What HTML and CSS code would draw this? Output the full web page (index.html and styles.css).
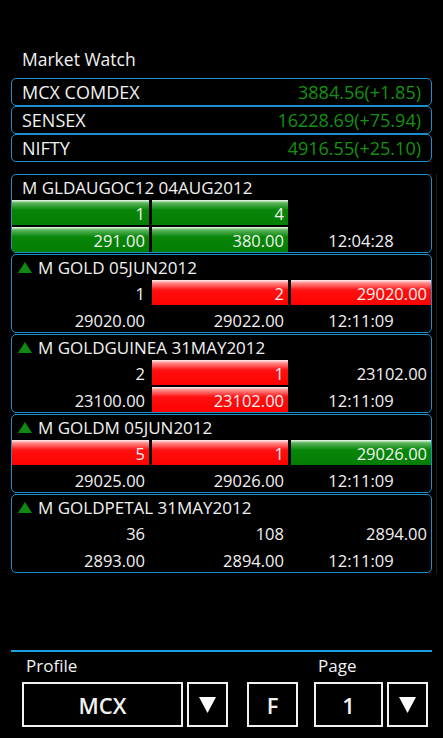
FILE: index.html
```html
<!DOCTYPE html>
<html lang="en">

<head>
    <meta charset="UTF-8">
    <meta name="viewport" content="width=device-width, initial-scale=1.0">
    <title>Market Watch</title>
    <link rel="stylesheet" href="styles.css">
</head>

<body>
    <div class="page">
        <div class="title">Market Watch</div>

        <div class="indices">
            <div class="index-row"><span>MCX COMDEX</span><span class="up">3884.56(+1.85)</span></div>
            <div class="index-row"><span>SENSEX</span><span class="up">16228.69(+75.94)</span></div>
            <div class="index-row"><span>NIFTY</span><span class="up">4916.55(+25.10)</span></div>
        </div>

        <div class="scroll">
            <div class="card">
                <div class="card-title">M GLDAUGOC12 04AUG2012</div>
                <div class="cells">
                    <div class="cell green">1</div>
                    <div class="cell green">4</div>
                    <div class="cell"></div>
                    <div class="cell green">291.00</div>
                    <div class="cell green">380.00</div>
                    <div class="cell time">12:04:28</div>
                </div>
            </div>

            <div class="card">
                <div class="card-title"><span class="arrow-up"></span>M GOLD 05JUN2012</div>
                <div class="cells">
                    <div class="cell">1</div>
                    <div class="cell red">2</div>
                    <div class="cell red">29020.00</div>
                    <div class="cell">29020.00</div>
                    <div class="cell">29022.00</div>
                    <div class="cell time">12:11:09</div>
                </div>
            </div>

            <div class="card">
                <div class="card-title"><span class="arrow-up"></span>M GOLDGUINEA 31MAY2012</div>
                <div class="cells">
                    <div class="cell">2</div>
                    <div class="cell red">1</div>
                    <div class="cell">23102.00</div>
                    <div class="cell">23100.00</div>
                    <div class="cell red">23102.00</div>
                    <div class="cell time">12:11:09</div>
                </div>
            </div>

            <div class="card">
                <div class="card-title"><span class="arrow-up"></span>M GOLDM 05JUN2012</div>
                <div class="cells">
                    <div class="cell red">5</div>
                    <div class="cell red">1</div>
                    <div class="cell green">29026.00</div>
                    <div class="cell">29025.00</div>
                    <div class="cell">29026.00</div>
                    <div class="cell time">12:11:09</div>
                </div>
            </div>

            <div class="card">
                <div class="card-title"><span class="arrow-up"></span>M GOLDPETAL 31MAY2012</div>
                <div class="cells">
                    <div class="cell">36</div>
                    <div class="cell">108</div>
                    <div class="cell">2894.00</div>
                    <div class="cell">2893.00</div>
                    <div class="cell">2894.00</div>
                    <div class="cell time">12:11:09</div>
                </div>
            </div>
        </div>

        <div class="footer">
            <div class="labels">
                <span class="label-profile">Profile</span>
                <span class="label-page">Page</span>
            </div>
            <div class="controls">
                <div class="box profile">MCX</div>
                <div class="box drop">
                    <svg width="17" height="16" viewBox="0 0 17 16"><path d="M0 0H17L8.5 16Z" fill="#fff" /></svg>
                </div>
                <div class="box f">F</div>
                <div class="box pagenum">1</div>
                <div class="box drop">
                    <svg width="17" height="16" viewBox="0 0 17 16"><path d="M0 0H17L8.5 16Z" fill="#fff" /></svg>
                </div>
            </div>
        </div>
    </div>
</body>

</html>
```

FILE: styles.css
```css
body {
    margin: 0;
    padding: 0;
    background: #000;
    color: #f2f2f2;
    font-family: "Open Sans", "Noto Sans", sans-serif;
    font-size: 17px;
}

.page {
    height: 738px;
    display: flex;
    flex-direction: column;
    padding: 0 11px;
    box-sizing: border-box;
}

.title {
    padding: 46px 0 0 11px;
    font-size: 17.5px;
    line-height: 26px;
    box-sizing: border-box;
    height: 78px;
}

.index-row {
    height: 28px;
    box-sizing: border-box;
    border: 1px solid #1a8fcc;
    border-radius: 5px;
    display: flex;
    justify-content: space-between;
    align-items: center;
    padding: 0 10px;
    font-size: 18px;
}

.up {
    color: #139213;
}

.scroll {
    margin-top: 12px;
    margin-right: -5px;
    padding-right: 4px;
    border-right: 1px solid #1c1c1c;
}

.card {
    height: 79px;
    box-sizing: border-box;
    border: 1px solid #1a8fcc;
    border-radius: 5px;
    margin-bottom: 1px;
    overflow: hidden;
}

.card-title {
    height: 25px;
    line-height: 24px;
    padding-left: 10px;
    display: flex;
    align-items: center;
    font-size: 17px;
}

.arrow-up {
    width: 0;
    height: 0;
    border-left: 7px solid transparent;
    border-right: 7px solid transparent;
    border-bottom: 11px solid #118a11;
    margin: 0 6px 0 -4px;
}

.cells {
    display: grid;
    grid-template-columns: 137px 136px 1fr;
    column-gap: 3px;
    row-gap: 2px;
    grid-auto-rows: 25px;
}

.cell {
    text-align: right;
    padding-right: 4px;
    line-height: 27px;
    font-size: 16.5px;
}

.cell.time {
    text-align: center;
    padding-right: 0;
}

.green {
    background: linear-gradient(#f2fbf2 0, #5cb55c 3px, #078607 10px, #047d04 100%);
}

.red {
    background: linear-gradient(#fff0f0 0, #ff8c8c 3px, #ff1010 10px, #ff0000 100%);
}

.footer {
    margin-top: auto;
    border-top: 2px solid #1ba1e2;
    padding-bottom: 11px;
}

.labels {
    height: 30px;
    position: relative;
    font-size: 17px;
    line-height: 28px;
}

.label-profile {
    padding-left: 15px;
}

.label-page {
    position: absolute;
    left: 307px;
}

.controls {
    display: flex;
    align-items: stretch;
    padding-left: 11px;
    height: 45px;
}

.box {
    border: 2px solid #f2f2f2;
    box-sizing: border-box;
    display: flex;
    align-items: center;
    justify-content: center;
    font-size: 22px;
    font-weight: 600;
}

.profile {
    width: 161px;
}

.drop {
    width: 41px;
    margin-left: 4px;
}

.f {
    width: 51px;
    margin-left: 19px;
}

.pagenum {
    width: 69px;
    margin-left: 16px;
}
```
